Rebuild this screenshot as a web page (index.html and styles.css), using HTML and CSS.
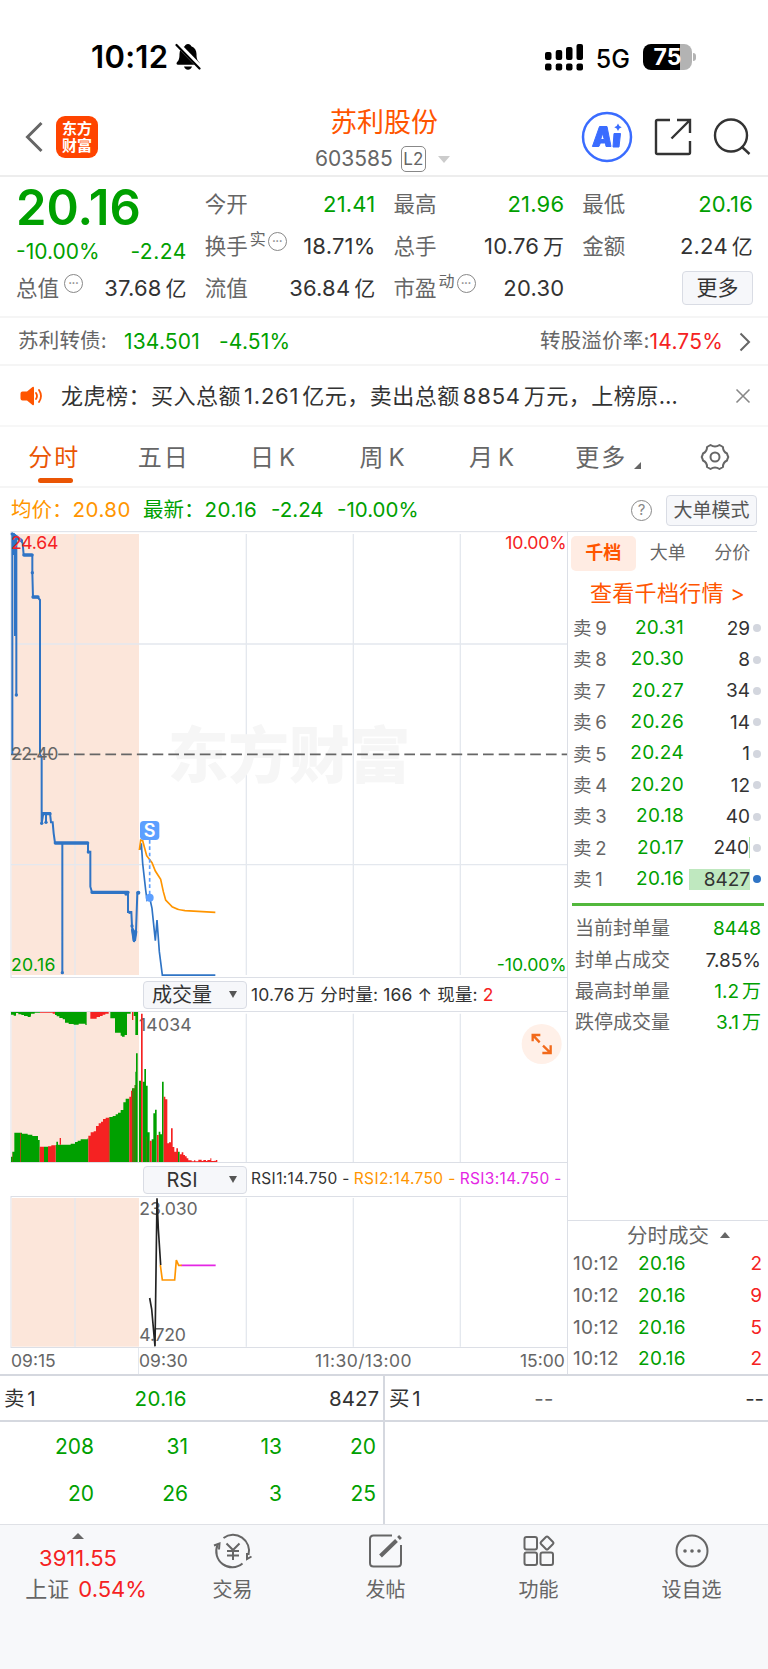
FILE: index.html
```html
<!DOCTYPE html>
<html lang="zh-CN">
<head>
  <meta charset="UTF-8" />
  <title>苏利股份 603585</title>
  <link rel="stylesheet" href="styles.css">
</head>
<body>
  <div class="statusbar">
    <span class="time">10:12</span>
    <svg class="bell" width="26" height="28" viewBox="0 0 26 28">
      <path d="M13 1c1.700 0 3 1 3.300 2.300 3.500 1.300 5.200 4.200 5.200 7.700 0 5 1 6.500 2.600 8.200.9 1 .5 2.500-1 2.500H3c-1.500 0-1.900-1.500-1-2.500C3.600 17.500 4.500 16 4.500 11c0-3.500 1.700-6.400 5.200-7.700C10 2 11.300 1 13 1z"/>
      <path d="M9 23.500h8c-.5 2-2 3.200-4 3.200s-3.500-1.200-4-3.200z"/>
      <path d="M1.500 0L26 25" stroke="#fff" stroke-width="5"/>
      <path d="M1.500 2L24.500 25.500" stroke="#000" stroke-width="2.200" stroke-linecap="round"/>
    </svg>
    <svg class="signal" width="39" height="27" viewBox="0 0 39 27">
      <rect x="0" y="8" width="6.500" height="8" rx="2"/><rect x="10.700" y="6" width="6.500" height="10" rx="2"/>
      <rect x="21" y="3" width="6.500" height="13" rx="2"/><rect x="31.500" y="0" width="6.500" height="16" rx="2"/>
      <rect x="0" y="19.500" width="6.500" height="7" rx="2"/><rect x="10.700" y="19.500" width="6.500" height="7" rx="2"/>
      <rect x="21" y="19.500" width="6.500" height="7" rx="2"/><rect x="31.500" y="19.500" width="6.500" height="7" rx="2"/>
    </svg>
    <span class="network">5G</span>
    <div class="battery"><span>75</span></div>
    <i class="battery-cap"></i>
  </div>

  <header class="header">
    <div class="header-left">
      <svg width="18" height="32" viewBox="0 0 18 32"><path d="M16.500 2L2.500 16l14 14" fill="none" stroke="#666" stroke-width="3"/></svg>
      <div class="logo">东方<br>财富</div>
    </div>
    <div class="header-title">
      <h1>苏利股份</h1>
      <p><span>603585</span><b>L2</b><i></i></p>
    </div>
    <div class="header-right">
      <svg width="52" height="52" viewBox="0 0 52 52">
        <circle cx="26" cy="26" r="24" fill="none" stroke="#3a6cff" stroke-width="2.500"/>
        <path d="M18.500 15.500h7.500l4 20h-5l-.6-3.500h-5l-1.500 3.500h-6.500zM21.500 22.500l-1.800 6h3.600z" fill="#3a6cff" fill-rule="evenodd" stroke="#3a6cff" stroke-width="1" stroke-linejoin="round"/>
        <path d="M33 22.500h6.500l-1.500 13.500h-6z" fill="#3a6cff" stroke="#3a6cff" stroke-linejoin="round"/>
        <path d="M37 12.500q.8 3 3.700 3.800-2.900.8-3.700 3.700-.8-2.900-3.700-3.700 2.900-.8 3.700-3.800z" fill="#3a6cff"/>
      </svg>
      <svg width="38" height="38" viewBox="0 0 38 38" fill="none" stroke="#333" stroke-width="2.400">
        <path d="M16 2H3.500Q2 2 2 3.500v31Q2 36 3.500 36h31q1.500 0 1.500-1.500V23"/>
        <path d="M23 2h13v13M36 2L17.500 20.500"/>
      </svg>
      <svg width="38" height="38" viewBox="0 0 38 38" fill="none" stroke="#333" stroke-width="2.400">
        <circle cx="18" cy="17.500" r="16"/>
        <path d="M28.500 28.500l8 7.500"/>
      </svg>
    </div>
  </header>

  <section class="quote">
    <div class="col">
      <div class="price">20.16</div>
      <div class="change"><span>-10.00%</span><span>-2.24</span></div>
      <div class="item"><label>总值</label><i class="more-dot low">•••</i><span>37.68<em>亿</em></span></div>
    </div>
    <div class="col">
      <div class="item"><label>今开</label><span class="green">21.41</span></div>
      <div class="item"><label>换手</label><sup>实</sup><i class="more-dot">•••</i><span>18.71%</span></div>
      <div class="item"><label>流值</label><span>36.84<em>亿</em></span></div>
    </div>
    <div class="col">
      <div class="item"><label>最高</label><span class="green">21.96</span></div>
      <div class="item"><label>总手</label><span>10.76<em>万</em></span></div>
      <div class="item"><label>市盈</label><sup>动</sup><i class="more-dot">•••</i><span>20.30</span></div>
    </div>
    <div class="col">
      <div class="item"><label>最低</label><span class="green">20.16</span></div>
      <div class="item"><label>金额</label><span>2.24<em>亿</em></span></div>
      <div class="item"><button class="more-btn">更多</button></div>
    </div>
  </section>

  <section class="bond">
    <label>苏利转债:</label>
    <span class="green bond-price">134.501</span>
    <span class="green bond-change">-4.51%</span>
    <label class="premium">转股溢价率:</label><span class="red">14.75%</span>
    <svg width="12" height="20" viewBox="0 0 12 20"><path d="M1.500 1.500L10 10l-8.500 8.500" fill="none" stroke="#666" stroke-width="2"/></svg>
  </section>

  <section class="news">
    <svg width="24" height="20" viewBox="0 0 24 20">
      <path d="M2.500 5.500H7L12.500 1Q14 .3 14 2v16q0 1.700-1.500 1L7 14.500H2.500Q.5 14.500.5 12.500v-5q0-2 2-2z" fill="#ff5500"/>
      <path d="M16 7q2 3 0 6M19 4q4 6 0 12" fill="none" stroke="#ff5500" stroke-width="1.800" stroke-linecap="round"/>
    </svg>
    <p>龙虎榜：买入总额<b>1.261</b>亿元，卖出总额<b>8854</b>万元，上榜原…</p>
    <svg width="16" height="16" viewBox="0 0 16 16"><path d="M1.500 1.500l13 13M14.500 1.500l-13 13" stroke="#888" stroke-width="1.600"/></svg>
  </section>

  <nav class="tabs">
    <a class="active">分时</a>
    <a>五日</a>
    <a>日<em>K</em></a>
    <a>周<em>K</em></a>
    <a>月<em>K</em></a>
    <a class="tab-more">更多<i></i></a>
    <a class="tab-set">
      <svg width="30" height="28" viewBox="0 0 30 28" fill="none" stroke="#666" stroke-width="2">
        <path d="M10.500 2Q15 5 19.500 2L23 4Q22.800 8.500 27 10.500 27.300 12 28.300 14 27.300 16 27 17.500 22.800 19.500 23 24L19.500 26Q15 23 10.500 26L7 24Q7.200 19.500 3 17.500 2.700 16 1.700 14 2.700 12 3 10.500 7.200 8.500 7 4z" stroke-linejoin="round"/>
        <circle cx="15" cy="14" r="4.500"/>
      </svg>
    </a>
  </nav>

  <section class="summary">
    <span class="orange avg">均价：<b>20.80</b></span>
    <span class="green latest">最新：<b>20.16</b></span>
    <span class="green diff">-2.24</span>
    <span class="green">-10.00%</span>
    <i class="help">?</i>
    <button>大单模式</button>
  </section>

  <main class="main">
    <div class="charts">
      <!-- price chart -->
      <svg class="chart" width="567" height="447" viewBox="0 33 1701 1341">
        <path class="frame" d="M33 35H1701M33 33V1374M33 1372.500H1701"/>
        <rect class="auction" x="35" y="42" width="382" height="1323"/>
        <path class="grid" d="M225 42V1365M739 42V1365M1060 42V1365M1381 42V1365M33 372H1701M33 1034H1701"/>
        <text class="watermark" x="503" y="775" textLength="728" lengthAdjust="spacingAndGlyphs">东方财富</text>
        <path class="middle" d="M33 703H1701"/>
        <g class="auction-line">
          <path d="M37 40V703M43 45V105M45 50V348M49 45V525M40 40L50 50 62 58 68 70 71 105H97V158L99 232H113L120 240V703L125 712V910L130 880H150L153 907H158L161 940 165 969H264V995H271V1100L276 1117H384V1176H394L396 1218 402 1266 408 1235 412 1118H419M138 880V907M187 969V1358"/>
          <path class="thick" d="M37 42L64 62M72 105H96M99 231H114M128 881H150M166 969H263M276 1117H384M398 1230L403 1262 407 1235"/>
          <g><circle cx="49" cy="525" r="5"/><circle cx="97" cy="158" r="5"/><circle cx="125" cy="910" r="5"/><circle cx="138" cy="907" r="5"/><circle cx="265" cy="996" r="5"/><circle cx="187" cy="1358" r="5"/><circle cx="378" cy="1122" r="5"/><circle cx="389" cy="1177" r="5"/><circle cx="396" cy="1218" r="5"/><circle cx="415" cy="1118" r="6"/></g>
        </g>
        <path class="line-blue" d="M419 990L424 970 428 1030 437 1110 441 1140 449 1133 456 1165 466 1262 471 1200 478 1295 487 1365.500H646"/>
        <path class="line-orange" d="M418 990L422 960 428 962 440 1007 456 1028 466 1053 482 1078 490 1115 497 1140 516 1160Q533 1170 555 1172L646 1177"/>
        <path d="M449 960V1125" stroke="#5c9fff" stroke-width="5" stroke-dasharray="11 8"/>
        <circle cx="449" cy="1133" r="12" fill="#5c9fff"/>
        <rect x="420" y="903" width="58" height="57" rx="11" fill="#5c9fff"/>
        <text x="449" y="951" class="badge" text-anchor="middle">S</text>
        <text class="tick up" x="33" y="87" textLength="142">24.64</text>
        <text class="tick up" x="1516" y="87" textLength="184">10.00%</text>
        <text class="tick" x="33" y="719" textLength="142">22.40</text>
        <text class="tick down" x="33" y="1353" textLength="133">20.16</text>
        <text class="tick down" x="1490" y="1353" textLength="210">-10.00%</text>
      </svg>

      <div class="indicator">
        <div class="picker">成交量<i></i></div>
        <p class="volume-info">10.76<em>万</em> 分时量: 166 ↑ 现量: <span class="red">2</span></p>
      </div>

      <!-- volume chart -->
      <svg class="chart" width="567" height="152" viewBox="0 123 1701 456">
        <path class="frame" d="M33 124.500H1701M33 123V579"/>
        <rect class="auction" x="35" y="126" width="382" height="450"/>
        <path class="grid" d="M225 131V576M739 131V576M1060 131V576M1381 131V576"/>
        <text class="tick" x="417" y="182" textLength="158">14034</text>
        <g fill="#00a000">
          <path d="M33 126H120V128H104V131H93V137H92V141H83V138H72V135H64V133H55V129H48V137H41V134H33z"/>
          <path d="M165 126H260V165H256V161H236V164H221V162H206V158H195V148H188V144H178V139H170V135H165z"/>
          <path d="M331 126H392V131H381V195H374V200H366V197H362V188H345V145H331zM401 126H414V195H406V138H401z"/>
          <path d="M33 576V560H37V545H43V488H66V491H83V494H97V498H114V510H119V576zM132 576V530H144V576z"/>
          <path d="M167 576V525H169V515H174V524H212V521H225V516H233V512H242V508H263V505H265V576z"/>
          <path d="M328 576V441H338V438H347V433H354V428H362V420H370V397H377V386H388V576zM396 576V355H404V345H406V305H408V250H413V576z"/>
          <path d="M417 576V332H423V576zM428 576V335H433V297H438V347H443V487H449V576zM455 576V508H460V430H465V419H470V576zM476 576V485H481V493H486V335H491V576zM534 576V545H539V576z"/>
        </g>
        <g fill="#f52222">
          <path d="M120 126H165V131H158V128H120zM271 126H326V131H316V134H308V138H300V141H290V146H271zM396 126H400V150H396z"/>
          <path d="M119 576V530H132V576zM144 576V529H154V526H167V576zM179 524V504H183V524zM60 576V490H62V576zM36 576V550H37V576z"/>
          <path d="M265 576V497H272V487H281V484H288V468H296V460H303V455H309V447H317V443H328V576zM388 576V380H393V362H397V576z"/>
          <path d="M423 576V131H428V576zM449 576V512H455V576zM471 576V495H476V576z"/>
          <path d="M491 576V380H496V388H502V520H507V517H513V475H518V531H523V545H529V535H534V576zM539 576V553H545V547H550V555H555V559H560V565H565V571H575V574H582V571H586V574H595V569H605V573H610V570H618V573H622V570H631V565H634V573H643V572H648V570H652V576z"/>
        </g>
        <path d="M328 442V576M400 355V576M405 345V576M439 500V576" stroke="#8a5a10" stroke-width="2"/>
        <path d="M225 165V515" stroke="#dde5ee" stroke-width="3"/>
        <path class="frame" d="M33 577.500H1701"/>
        <circle cx="1625" cy="222" r="60" fill="#fff0e8"/>
        <path d="M1598 214V195H1621M1600 197L1619 217M1627 249H1652V226M1650 247L1629 227" fill="none" stroke="#f26a1b" stroke-width="7"/>
      </svg>

      <div class="indicator">
        <div class="picker">RSI<i></i></div>
        <p class="rsi-info"><span>RSI1:14.750 -</span><span class="orange">RSI2:14.750 -</span><span class="magenta">RSI3:14.750 -</span></p>
      </div>

      <!-- rsi chart -->
      <svg class="chart" width="567" height="152" viewBox="0 681 1701 456">
        <path class="frame" d="M33 682.500H1701M33 681V1137"/>
        <rect class="auction" x="35" y="687" width="382" height="446"/>
        <path class="grid" d="M225 687V1133M739 687V1133M1060 687V1133M1381 687V1133"/>
        <text class="tick" x="418" y="739" textLength="175">23.030</text>
        <text class="tick" x="418" y="1115" textLength="140">4.720</text>
        <path d="M449 987L455 1020 465 1132 471 688 475 780 482 888" fill="none" stroke="#222" stroke-width="5"/>
        <path d="M481 888L487 933H524L529 873 536 889H546" fill="none" stroke="#ff9500" stroke-width="5"/>
        <path d="M545 889H647" stroke="#e426e4" stroke-width="5"/>
        <path class="frame" d="M33 1135.500H1701"/>
      </svg>

      <div class="axis"><span class="first">09:15</span><span class="second">09:30</span><span class="noon">11:30/13:00</span><span>15:00</span></div>
    </div>

    <aside class="side">
      <div class="side-tabs"><a class="active">千档</a><a>大单</a><a>分价</a></div>
      <a class="depth-link">查看千档行情 &gt;</a>
      <ul class="book">
        <li><label>卖 9</label><span>20.31</span><b>29</b><i></i></li>
        <li><label>卖 8</label><span>20.30</span><b>8</b><i></i></li>
        <li><label>卖 7</label><span>20.27</span><b>34</b><i></i></li>
        <li><label>卖 6</label><span>20.26</span><b>14</b><i></i></li>
        <li><label>卖 5</label><span>20.24</span><b>1</b><i></i></li>
        <li><label>卖 4</label><span>20.20</span><b>12</b><i></i></li>
        <li><label>卖 3</label><span>20.18</span><b>40</b><i></i></li>
        <li><label>卖 2</label><span>20.17</span><b class="thin">240</b><i></i></li>
        <li><label>卖 1</label><span>20.16</span><b class="full">8427</b><i class="blue"></i></li>
      </ul>
      <ul class="limit">
        <li><label>当前封单量</label><span class="green">8448</span></li>
        <li><label>封单占成交</label><span>7.85%</span></li>
        <li><label>最高封单量</label><span class="green">1.2<em>万</em></span></li>
        <li><label>跌停成交量</label><span class="green">3.1<em>万</em></span></li>
      </ul>
      <div class="ticks">
        <h3>分时成交<i></i></h3>
        <ul>
          <li><label>10:12</label><span class="green">20.16</span><b>2</b></li>
          <li><label>10:12</label><span class="green">20.16</span><b>9</b></li>
          <li><label>10:12</label><span class="green">20.16</span><b>5</b></li>
          <li><label>10:12</label><span class="green">20.16</span><b>2</b></li>
        </ul>
      </div>
    </aside>
  </main>

  <section class="queue">
    <div class="queue-side sell">
      <div class="queue-head"><label>卖 1</label><span class="green">20.16</span><b>8427</b></div>
      <div class="queue-grid">
        <span>208</span><span>31</span><span>13</span><span>20</span>
        <span>20</span><span>26</span><span>3</span><span>25</span>
      </div>
    </div>
    <div class="queue-side buy">
      <div class="queue-head"><label>买 1</label><span>--</span><b>--</b></div>
    </div>
  </section>

  <footer class="bottom-nav">
    <a class="index">
      <i></i>
      <strong>3911.55</strong>
      <span>上证 <b>0.54%</b></span>
    </a>
    <a>
      <svg width="40" height="36" viewBox="0 0 40 36" fill="none" stroke="#666" stroke-width="2">
        <path d="M10.500 5A16 16 0 0 1 35.500 22M29.500 30.500A16 16 0 0 1 4.500 12"/>
        <path d="M1 12.500l5.500-2-.5 6M38.500 23.500l-4.500 2.500v-6"/>
        <path d="M13.500 10.500L20 17l6.500-6.500M20 17v10M14 18h12M14 22.500h12"/>
      </svg>
      <span>交易</span>
    </a>
    <a>
      <svg width="36" height="36" viewBox="0 0 36 36" fill="none" stroke="#666" stroke-width="2">
        <path d="M24 2.500H5.500Q2 2.500 2 6v24q0 3.500 3.500 3.500h24q3.500 0 3.500-3.500V12"/>
        <path d="M12.500 23L28.500 7.500M30.500 5.500l2-2" stroke-width="4"/>
      </svg>
      <span>发帖</span>
    </a>
    <a>
      <svg width="34" height="36" viewBox="0 0 34 36" fill="none" stroke="#666" stroke-width="2">
        <rect x="2.500" y="4" width="12.500" height="12.500" rx="2"/>
        <rect x="2.500" y="19.500" width="12.500" height="12.500" rx="2"/>
        <rect x="18.500" y="19.500" width="12.500" height="12.500" rx="2"/>
        <rect x="20" y="5" width="10" height="10" rx="1.500" transform="rotate(45 25 10)"/>
      </svg>
      <span>功能</span>
    </a>
    <a>
      <svg width="36" height="36" viewBox="0 0 36 36">
        <circle cx="18" cy="18" r="15.500" fill="none" stroke="#666" stroke-width="2"/>
        <circle cx="11" cy="18" r="1.800" fill="#666"/><circle cx="18" cy="18" r="1.800" fill="#666"/><circle cx="25" cy="18" r="1.800" fill="#666"/>
      </svg>
      <span>设自选</span>
    </a>
  </footer>
</body>
</html>
```
FILE: styles.css
```css
* {
  box-sizing: border-box;
}
body {
  margin: 0;
  width: 768px;
  height: 1669px;
  overflow: hidden;
  background: #fff;
  color: #333;
  font-family: Inter, "Noto Sans CJK SC", sans-serif;
  font-size: 21px;
  line-height: 1.2;
  display: flex;
  flex-direction: column;
}
h1, h3, p, ul {
  margin: 0;
  padding: 0;
  font-weight: normal;
}
ul {
  list-style: none;
}
b, i, em {
  font-weight: normal;
  font-style: normal;
}
svg {
  display: block;
  flex: none;
}
button {
  font-family: inherit;
  padding: 0;
  background: #f6f7fa;
  border: 1px solid #d9dce4;
  border-radius: 4px;
}
.green { color: #00a000; }
.red { color: #f52222; }
.orange { color: #ff9500; }
.magenta { color: #e426e4; }

/* status bar */
.statusbar {
  height: 100px;
  padding: 14px 72px 0 91px;
  display: flex;
  align-items: center;
  color: #000;
}
.time {
  font-size: 31px;
  font-weight: 600;
  width: 84px;
  white-space: nowrap;
  letter-spacing: 0.3px;
}
.signal {
  margin-left: auto;
}
.network {
  font-size: 25px;
  font-weight: 500;
  line-height: 30px;
  margin: 3px 13px 0 12px;
}
.battery {
  width: 49px;
  height: 26px;
  border-radius: 8px;
  background: linear-gradient(to right, #000 37px, #b3b3b3 37px);
  color: #fff;
  font-size: 23px;
  font-weight: 700;
  line-height: 27px;
  text-align: center;
}
.battery-cap {
  width: 3px;
  height: 8px;
  margin-left: 1px;
  border-radius: 0 3px 3px 0;
  background: #b3b3b3;
}

/* header */
.header {
  height: 77px;
  border-bottom: 2px solid #ededed;
  display: grid;
  grid-template-columns: 1fr 200px 1fr;
}
.header-left {
  display: flex;
  align-items: center;
  padding: 0 0 3px 25px;
}
.logo {
  width: 42px;
  height: 42px;
  margin-left: 13px;
  padding-top: 5px;
  border-radius: 9px;
  background: #ff4400;
  color: #fff;
  font-size: 15px;
  font-weight: 700;
  line-height: 16.500px;
  text-align: center;
}
.header-title {
  text-align: center;
}
.header-title h1 {
  margin-top: 5px;
  font-size: 27px;
  line-height: 36px;
  color: #ff5500;
}
.header-title p {
  display: flex;
  align-items: center;
  padding-left: 31px;
  height: 36px;
  color: #666;
  font-size: 21px;
  white-space: nowrap;
}
.header-title b {
  margin: 0 12px 0 8px;
  width: 25px;
  height: 26px;
  border: 1.500px solid #888;
  border-radius: 5px;
  font-size: 17px;
  line-height: 24px;
}
.header-title i {
  border: 6px solid transparent;
  border-top: 7px solid #ccc;
  border-bottom: 0;
}
.header-right {
  display: flex;
  justify-content: flex-end;
  align-items: center;
  gap: 21px;
  padding: 0 17px 3px 0;
}

/* quote numbers */
.quote {
  height: 139px;
  padding: 6px 15px 0 16px;
  display: grid;
  grid-template-columns: repeat(4, 1fr);
  gap: 18px;
}
.price {
  height: 50px;
  font-size: 49px;
  font-weight: 600;
  line-height: 49px;
  color: #00a000;
}
.change {
  height: 34px;
  display: flex;
  justify-content: space-between;
  line-height: 38px;
  color: #00a000;
}
.change span:last-child {
  letter-spacing: 0.500px;
}
.item {
  position: relative;
  height: 42px;
  display: flex;
  align-items: center;
  font-size: 22px;
  line-height: 42px;
  white-space: nowrap;
}
.item label {
  color: #666;
  font-size: 21.500px;
}
.item span {
  margin-left: auto;
  letter-spacing: 0.200px;
}
.item em {
  margin-left: 4px;
  font-size: 21px;
}
.item sup {
  margin-left: 2px;
  color: #666;
  font-size: 16px;
  line-height: 16px;
  margin-bottom: 14px;
}
.more-dot {
  width: 19px;
  height: 19px;
  margin: 0 0 9px 2px;
  border: 1.500px solid #888;
  border-radius: 50%;
  color: #888;
  font-size: 6px;
  line-height: 16px;
  text-align: center;
}
.more-dot.low {
  margin-left: 5px;
}
.more-btn {
  margin-left: auto;
  width: 71px;
  height: 34px;
  color: #333;
  font-size: 21px;
  line-height: 30px;
}

/* bond row */
.bond {
  height: 50px;
  padding: 1px 17px 0 18px;
  border-top: 2px solid #f5f5f5;
  border-bottom: 2px solid #f5f5f5;
  display: flex;
  align-items: center;
  white-space: nowrap;
  letter-spacing: 0.200px;
}
.bond label {
  color: #666;
  font-size: 20.500px;
}
.bond-price {
  margin: 0 19px 0 17px;
}
.bond .premium {
  margin-left: auto;
}
.bond svg {
  margin-left: 16px;
}

/* news */
.news {
  height: 61px;
  padding: 1px 17px 0 20px;
  border-bottom: 2px solid #f7f7f7;
  display: flex;
  align-items: center;
}
.news p {
  flex: 1;
  margin-left: 17px;
  font-size: 22px;
  letter-spacing: 0.500px;
  white-space: nowrap;
}
.news b {
  margin: 0 3px;
  letter-spacing: 0.800px;
}

/* period tabs */
.tabs {
  height: 61px;
  border-bottom: 2px solid #f5f5f5;
  display: flex;
}
.tabs a {
  position: relative;
  flex: 1;
  display: flex;
  align-items: center;
  justify-content: center;
  padding: 3px 0 0 3px;
  font-size: 24px;
  color: #666;
  letter-spacing: 2px;
}
.tabs em {
  margin-left: 3px;
}
.tabs .active {
  padding-left: 1px;
  color: #ea5504;
}
.tabs .active::after {
  content: "";
  position: absolute;
  left: 38px;
  bottom: 3px;
  width: 35px;
  height: 5px;
  border-radius: 3px;
  background: #ea5504;
}
.tabs .tab-more {
  padding-left: 9px;
}
.tab-more i {
  align-self: flex-end;
  margin: 0 0 17px 7px;
  border-left: 7px solid transparent;
  border-bottom: 7px solid #666;
}
.tabs .tab-set {
  padding: 0;
}

/* average / latest */
.summary {
  height: 43px;
  padding: 1px 11px 0;
  display: flex;
  align-items: center;
  font-size: 20.500px;
  white-space: nowrap;
}
.summary b {
  letter-spacing: 0.500px;
}
.summary .avg {
  width: 132px;
}
.summary .latest {
  width: 128px;
}
.summary .diff {
  width: 66px;
}
.help {
  margin-left: auto;
  width: 21px;
  height: 21px;
  border: 1.500px solid #888;
  border-radius: 50%;
  color: #888;
  font-size: 15px;
  line-height: 18px;
  text-align: center;
}
.summary button {
  margin-left: 14px;
  width: 91px;
  height: 31px;
  color: #555;
  font-size: 19px;
  line-height: 27px;
}

/* charts */
.main {
  display: flex;
  height: 845px;
  border-bottom: 2px solid #d5d8df;
}
.charts {
  width: 567px;
}
.frame {
  stroke: #dcdfe6;
  stroke-width: 3;
}
.auction {
  fill: #fce6da;
}
.grid {
  stroke: #e4e8ee;
  stroke-width: 4;
}
.middle {
  stroke: #666;
  stroke-width: 5;
  stroke-dasharray: 32 15.200;
}
.watermark {
  font-size: 184px;
  font-weight: 900;
  fill: #f6f6f6;
}
.auction-line {
  fill: #2f74c5;
}
.auction-line path {
  fill: none;
  stroke: #2f74c5;
  stroke-width: 6;
}
.auction-line .thick {
  stroke-width: 10;
  stroke-linecap: round;
}
.line-blue {
  fill: none;
  stroke: #2f74c5;
  stroke-width: 5;
}
.line-orange {
  fill: none;
  stroke: #ff9500;
  stroke-width: 5;
}
.badge {
  fill: #fff;
  font-size: 54px;
  font-weight: 600;
}
.tick {
  fill: #666;
  font-size: 53px;
}
.tick.up { fill: #f52222; }
.tick.down { fill: #00a000; }
.indicator {
  height: 33px;
  padding-left: 143px;
  display: flex;
  align-items: center;
  white-space: nowrap;
}
.picker {
  position: relative;
  width: 104px;
  height: 28px;
  padding-right: 26px;
  background: #f6f7fa;
  border: 1px solid #d9dce4;
  border-radius: 4px;
  font-size: 20px;
  line-height: 26px;
  text-align: center;
}
.picker i {
  position: absolute;
  right: 9px;
  top: 9px;
  border: 4px solid transparent;
  border-top: 7px solid #555;
  border-bottom: 0;
}
.indicator p {
  margin-left: 4px;
}
.volume-info {
  font-size: 17.500px;
  letter-spacing: 0.120px;
}
.volume-info em {
  margin-left: 3px;
}
.rsi-info {
  display: flex;
  gap: 4px;
  font-size: 15.500px;
  letter-spacing: 0.350px;
}
.axis {
  display: flex;
  padding-left: 11px;
  height: 26px;
  font-size: 17.500px;
  line-height: 26px;
  color: #666;
}
.axis .first {
  width: 128px;
  border-right: 1px solid #e4e8ee;
}
.axis .second {
  width: 176px;
}
.axis .noon {
  width: 205px;
  letter-spacing: 0.400px;
}

/* right panel */
.side {
  width: 201px;
  border-left: 1px solid #dcdfe6;
  display: flex;
  flex-direction: column;
}
.side-tabs {
  height: 40px;
  margin-right: 11px;
  padding: 4px 0 0 3px;
  border-top: 1px solid #dcdfe6;
  display: flex;
}
.side-tabs a {
  flex: none;
  width: 64.500px;
  height: 35px;
  font-size: 18px;
  line-height: 34px;
  text-align: center;
  color: #666;
}
.side-tabs .active {
  border-radius: 5px;
  background: #ffece3;
  color: #ff5500;
  font-weight: 700;
}
.depth-link {
  height: 41px;
  padding-left: 22px;
  font-size: 22px;
  line-height: 44px;
  letter-spacing: 0.300px;
  color: #ff5500;
  white-space: nowrap;
}
.book {
  margin: 0 4px 0 4px;
  padding-bottom: 8px;
  border-bottom: 3px solid #52b83c;
}
.book li {
  height: 31.400px;
  padding: 1px 2px 0 1px;
  display: flex;
  align-items: center;
  font-size: 19px;
}
.book label {
  width: 37px;
  color: #666;
  font-size: 18.500px;
  word-spacing: -1.500px;
}
.book span {
  width: 74px;
  text-align: right;
  color: #00a000;
  letter-spacing: 0.300px;
}
.book b {
  width: 61px;
  height: 21px;
  margin-left: 5px;
  line-height: 21px;
  text-align: right;
}
.book .thin {
  border-right: 1px solid #a9dfa0;
}
.book .full {
  background: #bfe8bf;
}
.book i {
  width: 8px;
  height: 8px;
  margin-left: 3px;
  border-radius: 50%;
  background: #d3d6de;
}
.book .blue {
  background: #2f74c5;
}
.limit {
  margin: 8px 7px 0 7px;
}
.limit li {
  height: 31.400px;
  padding-top: 1px;
  display: flex;
  justify-content: space-between;
  align-items: center;
  font-size: 19px;
}
.limit label {
  color: #666;
  font-size: 19px;
}
.limit em {
  margin-left: 3px;
}
.ticks {
  margin-top: auto;
  height: 154px;
  border-top: 1px solid #dcdfe6;
}
.ticks h3 {
  display: flex;
  align-items: center;
  height: 28px;
  padding-left: 59px;
  font-size: 20.500px;
  line-height: 27px;
  color: #666;
}
.ticks h3 i {
  margin-left: 11px;
  border: 5px solid transparent;
  border-bottom: 6px solid #666;
  border-top: 0;
}
.ticks li {
  height: 31.600px;
  padding: 0 6px 0 5px;
  display: flex;
  align-items: center;
  font-size: 19px;
}
.ticks label {
  width: 65px;
  color: #666;
  letter-spacing: 0.300px;
}
.ticks span {
  letter-spacing: 0.300px;
}
.ticks b {
  margin-left: auto;
  color: #f52222;
}

/* order queue */
.queue {
  height: 148px;
  display: flex;
}
.sell {
  width: 383px;
}
.buy {
  width: 385px;
  border-left: 2px solid #d5d8df;
}
.queue-head {
  height: 46px;
  padding: 3px 4px 0;
  border-bottom: 2px solid #d5d8df;
  display: flex;
  align-items: center;
  font-size: 20.500px;
}
.queue-head label {
  width: 90px;
  word-spacing: -3px;
}
.queue-head span {
  width: 93px;
  text-align: right;
  letter-spacing: 0.500px;
}
.buy .queue-head span {
  width: 75px;
  color: #666;
}
.queue-head b {
  margin-left: auto;
}
.queue-grid {
  display: grid;
  grid-template-columns: repeat(4, 94px);
  grid-auto-rows: 46.700px;
  line-height: 50px;
  text-align: right;
  color: #00a000;
}

/* bottom nav */
.bottom-nav {
  flex: 1;
  padding-top: 8px;
  border-top: 1px solid #dfe1e6;
  background: #f7f8fa;
  display: grid;
  grid-template-columns: 156px repeat(4, 153px);
  color: #666;
}
.bottom-nav a {
  display: flex;
  flex-direction: column;
  align-items: center;
}
.bottom-nav span {
  font-size: 20px;
  line-height: 28px;
  margin-top: 7px;
}
.index i {
  border: 6px solid transparent;
  border-bottom: 6px solid #666;
  border-top: 0;
}
.index strong {
  margin-top: 4px;
  font-size: 22px;
  font-weight: normal;
  line-height: 30px;
  color: #f52222;
}
.bottom-nav .index span {
  margin: 2px 0 0 16px;
  font-size: 22px;
}
.index b {
  margin-left: 3px;
  color: #f52222;
}
```
